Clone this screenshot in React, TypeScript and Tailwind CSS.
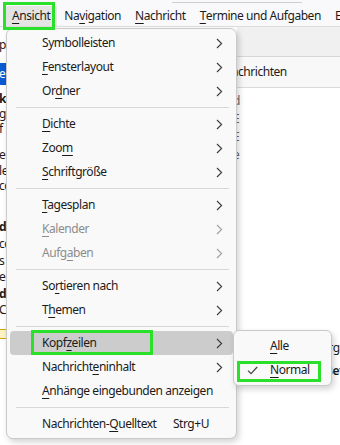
type MenuEntry =
  | { sep: true }
  | {
      sep?: false;
      label: string;
      k?: number;
      sub?: boolean;
      disabled?: boolean;
      shortcut?: string;
      active?: boolean;
    };

const viewMenu: MenuEntry[] = [
  { label: "Symbolleisten", sub: true },
  { label: "Fensterlayout", k: 0, sub: true },
  { label: "Ordner", k: 2, sub: true },
  { sep: true },
  { label: "Dichte", k: 0, sub: true },
  { label: "Zoom", k: 3, sub: true },
  { label: "Schriftgröße", k: 0, sub: true },
  { sep: true },
  { label: "Tagesplan", k: 0, sub: true },
  { label: "Kalender", k: 0, sub: true, disabled: true },
  { label: "Aufgaben", k: 4, sub: true, disabled: true },
  { sep: true },
  { label: "Sortieren nach", k: 2, sub: true },
  { label: "Themen", k: 1, sub: true },
  { sep: true },
  { label: "Kopfzeilen", k: 4, sub: true, active: true },
  { label: "Nachrichteninhalt", k: 9, sub: true },
  { label: "Anhänge eingebunden anzeigen", k: 0 },
  { sep: true },
  { label: "Nachrichten-Quelltext", k: 12, shortcut: "Strg+U" },
];

const menuBar = [
  { label: "Ansicht", k: 0, open: true },
  { label: "Navigation", k: 2 },
  { label: "Nachricht", k: 0 },
  { label: "Termine und Aufgaben", k: 0 },
  { label: "Extras", k: 1 },
];

// bits of the folder pane that peek out left of the menu
const folderRows: { h: number; t?: string; bold?: boolean; sel?: boolean; icon?: boolean }[] = [
  { h: 10 },
  { h: 16, t: "p" },
  { h: 10 },
  { h: 22, t: "e", sel: true },
  { h: 6 },
  { h: 16, t: "k(", bold: true },
  { h: 14, t: "g" },
  { h: 16, t: "f" },
  { h: 10 },
  { h: 16, t: "er" },
  { h: 15, t: "le" },
  { h: 15, t: "cc" },
  { h: 26 },
  { h: 16, t: "d", bold: true },
  { h: 17, t: "cc" },
  { h: 17, t: "s" },
  { h: 16, t: "ei" },
  { h: 17, t: "d", bold: true },
  { h: 15, t: "C" },
  { h: 10 },
  { h: 14, icon: true },
];

const listRows = ["d", "E", "E", "e", "l", "(", "l", "", "l", "", "l", "", ""];

function Label({ text, k }: { text: string; k?: number }) {
  if (k === undefined) return <>{text}</>;
  return (
    <>
      {text.slice(0, k)}
      <span className="underline decoration-1 underline-offset-[3px]">{text[k]}</span>
      {text.slice(k + 1)}
    </>
  );
}

function Chevron({ dim }: { dim?: boolean }) {
  return (
    <svg width="7" height="11" viewBox="0 0 7 11" className={dim ? "text-[#a0a0a0]" : "text-[#3a3a3a]"}>
      <path d="M1 1l4.6 4.5L1 10" fill="none" stroke="currentColor" strokeWidth="1.1" />
    </svg>
  );
}

function Check() {
  return (
    <svg width="11" height="9" viewBox="0 0 11 9" className="text-[#444]">
      <path d="M1 4.6l3 3L10.2 1" fill="none" stroke="currentColor" strokeWidth="1.2" />
    </svg>
  );
}

export default function App() {
  return (
    <div className="relative h-[445px] w-[340px] overflow-hidden bg-white font-['Noto_Sans',sans-serif] text-[12px] tracking-[-0.45px] text-[#1b1b1b]">
      {/* title strip + menubar */}
      <div className="h-[5px] bg-[#f9f9fb]">
        <div className="ml-[172px] w-[130px] border-b border-[#cfcfcf] pt-[2px]" />
      </div>
      <div className="flex h-[22px] items-stretch border-b border-[#dedede] bg-[#f9f9fb] pl-[5px] pt-[1px] whitespace-nowrap">
        {menuBar.map((m) => (
          <div key={m.label} className={`flex items-center px-[7px] ${m.open ? "bg-[#e4e4e4]" : ""}`}>
            <Label text={m.label} k={m.k} />
          </div>
        ))}
      </div>

      {/* app body behind the menu */}
      <div className="flex h-[418px]">
        <div className="w-[237px] shrink-0 overflow-hidden bg-white">
          {folderRows.map((r, i) => (
            <div
              key={i}
              style={{ height: r.h }}
              className={`flex items-center leading-none ${r.sel ? "bg-[#0b5bd3] text-white" : ""} ${r.bold ? "font-bold" : ""}`}
            >
              {r.icon ? (
                <div className="h-[10px] w-[9px] -ml-[2px] rounded-[1px] border border-[#d9a400] bg-[#fff3c4]" />
              ) : (
                <span className="-ml-[1px]">{r.t}</span>
              )}
            </div>
          ))}
        </div>
        <div className="flex min-w-0 flex-1 flex-col overflow-hidden">
          <div className="h-[30px] border-b border-[#d6d6d6] bg-[#f0f0f0]" />
          <div className="flex h-[31px] items-center border-b border-[#dadada] bg-[#f8f8f8] whitespace-nowrap">
            <span className="-ml-[14px]">Nachrichten</span>
          </div>
          <div className="flex flex-col pt-[4px] text-[#666]">
            {listRows.map((c, i) => (
              <div key={i} className="-ml-[4px] h-[18px] leading-[18px]">
                {c}
              </div>
            ))}
          </div>
          <div className="mt-[10px] flex flex-col whitespace-nowrap">
            <div className="h-[23px] pl-[74px] leading-[23px]">Morgen</div>
            <div className="h-[23px] pl-[88px] font-semibold leading-[23px]">Betreff</div>
          </div>
        </div>
      </div>

      {/* open "Ansicht" menu */}
      <div className="absolute left-[6px] top-[28px] w-[231px] rounded-[7px] border border-[#c9c9c9] bg-[#f9f9f9] px-[3px] py-[2px] shadow-[2px_3px_6px_rgba(0,0,0,0.18)]">
        {viewMenu.map((it, i) =>
          it.sep ? (
            <div key={i} className="flex h-[9px] items-center pl-[6px] pr-[4px]">
              <div className="h-px w-full bg-[#d7d7d7]" />
            </div>
          ) : (
            <div
              key={i}
              className={`flex h-[24px] items-center rounded-[4px] pl-[32px] pr-[10px] whitespace-nowrap ${
                it.active ? "bg-[#cccccc]" : ""
              } ${it.disabled ? "text-[#8c8c8c]" : ""}`}
            >
              <span className="flex-1">
                <Label text={it.label} k={it.k} />
              </span>
              {it.shortcut && <span className="mr-[14px]">{it.shortcut}</span>}
              {it.sub && <Chevron dim={it.disabled} />}
            </div>
          )
        )}
      </div>

      {/* "Kopfzeilen" submenu */}
      <div className="absolute left-[233px] top-[330px] w-[99px] rounded-[6px] border border-[#c9c9c9] bg-[#f9f9f9] px-[3px] py-[3px] shadow-[2px_3px_6px_rgba(0,0,0,0.18)]">
        <div className="flex h-[24px] items-center pl-[33px]">
          <Label text="Alle" k={0} />
        </div>
        <div className="flex h-[24px] items-center pl-[10px]">
          <Check />
          <span className="ml-[12px]">
            <Label text="Normal" k={0} />
          </span>
        </div>
      </div>

      {/* green annotation boxes */}
      <div className="pointer-events-none absolute left-[3px] top-[2px] h-[28px] w-[52px] border-[3px] border-[#2be02b]" />
      <div className="pointer-events-none absolute left-[31px] top-[330px] h-[25px] w-[122px] border-[3px] border-[#2be02b]" />
      <div className="pointer-events-none absolute left-[237px] top-[361px] h-[21px] w-[84px] border-[3px] border-[#2be02b]" />
    </div>
  );
}
